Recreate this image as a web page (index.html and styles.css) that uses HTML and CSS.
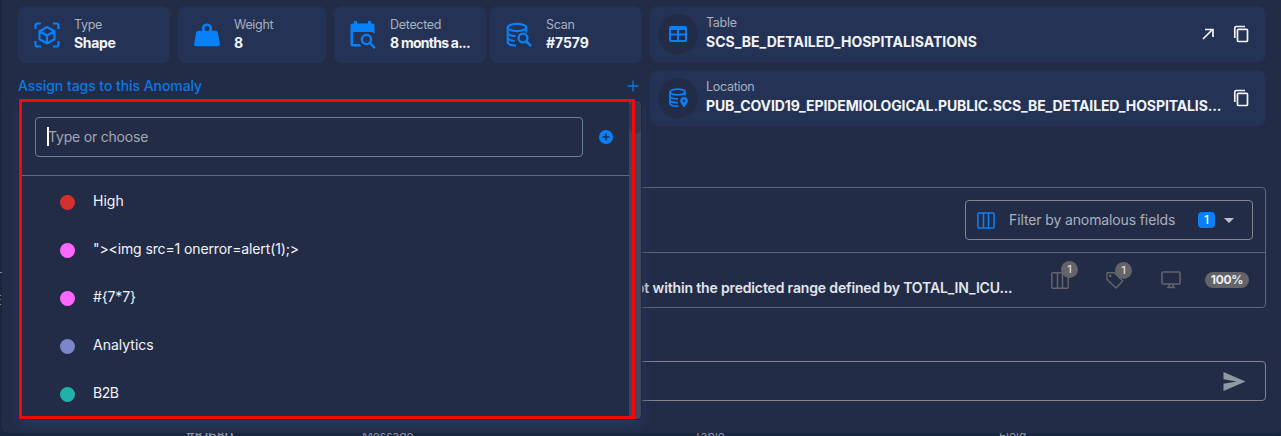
FILE: index.html
```html
<!DOCTYPE html>
<html lang="en">
<head>
<meta charset="utf-8">
<title>Anomaly</title>
<link rel="stylesheet" href="styles.css">
</head>
<body>
<div class="page">
  <div class="page-side"><span>T</span><span>E</span></div>
  <div class="page-row"><span class="c1">#81680</span><span class="c2">Message</span><span class="c3">Table</span><span class="c4">Field</span></div>
</div>
<main class="dialog">
  <section class="summary">
    <div class="left">
      <div class="stats">
        <div class="card stat">
          <svg class="i28" viewBox="0 0 28 28" fill="none" stroke="currentColor" stroke-width="2.2"><path d="M2.500 8V4.500a2 2 0 0 1 2-2H8M20 2.500h3.500a2 2 0 0 1 2 2V8M25.500 20v3.500a2 2 0 0 1-2 2H20M8 25.500H4.500a2 2 0 0 1-2-2V20"/><path stroke-linejoin="round" d="M14 6l7.500 4.200v8L14 22.500l-7.500-4.300v-8zM6.500 10.200L14 14.500l7.500-4.300M14 14.500v8"/></svg>
          <div><p class="label">Type</p><p class="value v-shape">Shape</p></div>
        </div>
        <div class="card stat">
          <svg class="i28" viewBox="0 0 28 28"><path fill="currentColor" fill-rule="evenodd" d="M14 2.500a5 5 0 0 1 4.600 7.300h4.200a2 2 0 0 1 2 1.500l2 11.200a2.400 2.400 0 0 1-2.400 2.800H3.600a2.400 2.400 0 0 1-2.400-2.800l2-11.200a2 2 0 0 1 2-1.500h4.200A5 5 0 0 1 14 2.500zm0 2.600a2.500 2.500 0 1 0 0 5a2.500 2.500 0 0 0 0-5z"/></svg>
          <div><p class="label">Weight</p><p class="value">8</p></div>
        </div>
        <div class="card stat">
          <svg class="i28" viewBox="0 0 28 28"><path fill="currentColor" d="M5 0h3v2.500h11V0h3v2.500h1.500a2 2 0 0 1 2 2V13l-2.300-2H4.200v12h6.500l2 2.500H3.500a2 2 0 0 1-2-2v-19a2 2 0 0 1 2-2H5z"/><g fill="none" stroke="currentColor" stroke-width="2.400"><circle cx="17.500" cy="18.500" r="4.600"/><path d="M20.800 22l5.200 5.200"/></g></svg>
          <div><p class="label">Detected</p><p class="value v-months">8 months a...</p></div>
        </div>
        <div class="card stat scan">
          <svg class="i28" viewBox="0 0 28 28" fill="none" stroke="currentColor" stroke-width="2.100"><ellipse cx="12" cy="6.500" rx="9.300" ry="3.600"/><path d="M2.700 6.500v14.500c0 2 3.700 3.400 8.300 3.600M2.700 11.500c0 1.900 3.500 3.300 8 3.500M2.700 16.500c0 1.900 3 3 7 3.500M21.300 6.500v5"/><circle cx="18" cy="17" r="4.400" stroke-width="2.400"/><path d="M21 20l5 5.200" stroke-width="2.600"/></svg>
          <div><p class="label">Scan</p><p class="value v-scan">#7579</p></div>
        </div>
      </div>
      <div class="assign"><span>Assign tags to this Anomaly</span>
        <svg width="12" height="12" viewBox="0 0 12 12" stroke="currentColor" stroke-width="1.300"><path d="M6 .5v11M.5 6h11"/></svg>
      </div>
    </div>
    <div class="right">
      <div class="card source">
        <span class="disc"><svg width="20" height="18" viewBox="0 0 20 18"><path fill="currentColor" fill-rule="evenodd" d="M3 1h14a2 2 0 0 1 2 2v12a2 2 0 0 1-2 2H3a2 2 0 0 1-2-2V3a2 2 0 0 1 2-2zm0 4v3.500h6V5zm8 0v3.500h6V5zM3 10.500V15h6v-4.500zm8 0V15h6v-4.500z"/></svg></span>
        <div class="grow"><p class="label">Table</p><p class="value v-table">SCS_BE_DETAILED_HOSPITALISATIONS</p></div>
        <svg class="open" width="12" height="12" viewBox="0 0 12 12" fill="none" stroke="currentColor" stroke-width="1.700"><path d="M1 11L10.500 1.500M3 1.500h8V9"/></svg>
        <svg width="16" height="18" viewBox="0 0 16 18" fill="none" stroke="currentColor" stroke-width="1.700"><path d="M1.800 13V3a1.500 1.500 0 0 1 1.500-1.500H12"/><rect x="4.500" y="4.300" width="10" height="12.200" rx="1"/></svg>
      </div>
      <div class="card source">
        <span class="disc"><svg width="20" height="20" viewBox="0 0 20 20" fill="none" stroke="currentColor" stroke-width="1.800"><ellipse cx="9.500" cy="4" rx="7.500" ry="2.800"/><path d="M2 4v11.500c0 1.600 3.500 2.700 8.500 2.700M17 4v3.500M2 8c0 1.700 3.500 2.900 8 2.900M2 12c0 1.600 3.500 2.600 8 2.600"/><path fill="currentColor" stroke="none" fill-rule="evenodd" d="M16 9a3.800 3.800 0 0 1 3.800 3.800c0 2.500-3.800 6.700-3.800 6.700s-3.800-4.200-3.800-6.700A3.800 3.800 0 0 1 16 9zm0 2.600a1.300 1.300 0 1 0 0 2.600a1.300 1.300 0 0 0 0-2.600z"/></svg></span>
        <div class="grow"><p class="label">Location</p><p class="value v-location">PUB_COVID19_EPIDEMIOLOGICAL.PUBLIC.SCS_BE_DETAILED_HOSPITALIS...</p></div>
        <svg width="16" height="18" viewBox="0 0 16 18" fill="none" stroke="currentColor" stroke-width="1.700"><path d="M1.800 13V3a1.500 1.500 0 0 1 1.500-1.500H12"/><rect x="4.500" y="4.300" width="10" height="12.200" rx="1"/></svg>
      </div>
    </div>
  </section>
  <section class="checks">
    <div class="checks-head">
      <div class="filter">
        <svg width="18" height="17" viewBox="0 0 18 17" fill="none" stroke="currentColor" stroke-width="1.500"><rect x=".9" y=".9" width="16.200" height="15.200" rx="1"/><path d="M6.500 1v15M11.500 1v15"/></svg>
        <span class="filter-text">Filter by anomalous fields</span><b>1</b><i></i>
      </div>
    </div>
    <div class="checks-row">
      <p class="message">ot within the predicted range defined by TOTAL_IN_ICU...</p>
      <span class="meta"><svg width="18" height="17" viewBox="0 0 18 17" fill="none" stroke="currentColor" stroke-width="1.500"><rect x=".8" y=".8" width="16.400" height="15.400" rx="1"/><path d="M6.500 1v15M11.500 1v15"/></svg><em>1</em></span>
      <span class="meta tag"><svg width="18" height="18" viewBox="0 0 18 18" fill="none" stroke="currentColor" stroke-width="1.500" stroke-linejoin="round"><path d="M1 1.800h7.500l8.200 8.200-6.700 7L1 8.500z"/><circle cx="4.200" cy="4.800" r=".6"/></svg><em>1</em></span>
      <svg class="monitor" width="20" height="18" viewBox="0 0 20 18" fill="none" stroke="currentColor" stroke-width="1.600"><rect x="1" y="1" width="18" height="12" rx="1"/><path d="M8 13v3.500M12 13v3.500M6 16.500h8"/></svg>
      <span class="percent">100%</span>
    </div>
  </section>
  <div class="comment"><svg width="23" height="19" viewBox="0 0 23 19"><path fill="currentColor" d="M.5 0l22 9.500L.5 19v-7.300l13-2.200-13-2.200z"/></svg></div>

  <div class="popover">
    <div class="pop-main">
      <div class="pop-head"><div class="input"><i class="caret"></i><span>Type or choose</span></div>
        <svg width="14" height="14" viewBox="0 0 14 14"><circle cx="7" cy="7" r="7" fill="#0880fa"/><path d="M7 3.500v7M3.500 7h7" stroke="#222c47" stroke-width="1.400"/></svg></div>
      <ul>
        <li><i class="red"></i><span>High</span></li>
        <li><i class="pink"></i><span class="t-img">"&gt;&lt;img src=1 onerror=alert(1);&gt;</span></li>
        <li><i class="pink"></i><span class="t-code">#{7*7}</span></li>
        <li><i class="violet"></i><span>Analytics</span></li>
        <li><i class="teal"></i><span class="t-b2b">B2B</span></li>
      </ul>
    </div>
    <div class="scroll"><div></div></div>
  </div>
  <div class="highlight"></div>
</main>
</body>
</html>
```
FILE: styles.css
```css
* { box-sizing: border-box; }
body { margin: 0; height: 436px; overflow: hidden; position: relative; background: #192640; font-family: Inter, "Liberation Sans", sans-serif; font-size: 14px; color: #f2f4f8; }
p, ul { margin: 0; padding: 0; }
svg { display: block; flex: none; }
.page { height: 436px; overflow: hidden; display: flex; flex-direction: column; justify-content: space-between; color: #8a92a3; font-size: 13px; }
.page-side { padding-top: 266px; margin-left: -6px; display: flex; flex-direction: column; line-height: 23px; }
.page-row { display: flex; padding-left: 186px; height: 8px; line-height: 15px; flex: none; white-space: nowrap; font-size: 12px; }
.c1 { width: 176px; font-weight: 600; font-size: 13px; }
.c2 { width: 332px; }
.c3 { width: 305px; }
.dialog { position: absolute; top: 0; left: 2px; right: 0; height: 433px; padding: 6px 15px 0 16px; overflow: hidden; background: #232c47; border-radius: 0 0 6px 6px; }
.summary { display: flex; gap: 8px; height: 120px; }
.left { width: 624px; }
.right { width: 616px; display: flex; flex-direction: column; gap: 8px; }
.card { background: #243355; border-radius: 8px; display: flex; align-items: center; }
.stats { display: flex; height: 57px; }
.stat { width: 152px; padding-left: 15px; gap: 13px; height: 57px; margin-right: 8px; }
.stats .stat:nth-child(2) { width: 148px; }
.stats .stat:nth-child(3) { margin-right: 4px; }
.stats .scan { margin-right: 0; }
.i28 { width: 28px; height: 28px; color: #0880fa; }
.label { font-size: 12.500px; line-height: 18px; letter-spacing: -.3px; color: #a9b0bf; white-space: nowrap; }
.value { font-size: 14px; line-height: 20px; font-weight: 700; letter-spacing: -.5px; white-space: nowrap; }
.stat .value { margin-top: -1px; }
.v-shape { letter-spacing: -.35px; }
.v-months { letter-spacing: -.75px; }
.v-scan { letter-spacing: -.1px; }
.v-table { letter-spacing: 0; }
.v-location { letter-spacing: -.11px; }
.assign { display: flex; justify-content: space-between; align-items: center; height: 34px; padding: 0 3px 0 0; margin-top: 6px; color: #0779e8; font-size: 14px; font-weight: 500; letter-spacing: -.06px; }
.assign span { padding-bottom: 2px; }
.source { height: 56px; padding: 0 17px 0 8px; }
.disc { width: 40px; height: 40px; border-radius: 50%; background: #222c47; display: grid; place-items: center; color: #0880fa; margin-right: 8px; flex: none; }
.grow { flex: 1; min-width: 0; padding-bottom: 2px; }
.open { margin-right: 19px; }
.checks { margin-top: 61px; height: 121px; border: 1px solid #5d667c; border-radius: 4px; }
.checks-head { height: 65px; display: flex; justify-content: flex-end; align-items: center; padding-right: 12px; border-bottom: 1px solid #5d667c; }
.filter { width: 288px; height: 40px; border: 1px solid #83858b; border-radius: 4px; display: flex; align-items: center; padding-left: 11px; color: #0880fa; }
.filter-text { margin-left: 14px; width: 189px; padding-bottom: 2px; color: #a9b0bf; font-size: 14px; letter-spacing: -.12px; white-space: nowrap; }
.filter b { width: 17px; height: 16px; border-radius: 4px; background: #0880fa; color: #fff; font-size: 12px; font-weight: 500; line-height: 16px; text-align: center; }
.filter i { margin-left: 9px; border: 5px solid transparent; border-top-color: #bdc1ca; border-bottom: 0; }
.checks-row { height: 54px; display: flex; align-items: center; padding-left: 617px; color: #626467; }
.message { width: 415px; padding-top: 15px; color: #e2e5ea; font-weight: 600; font-size: 14px; letter-spacing: -.15px; white-space: nowrap; }
.meta { position: relative; margin-right: 37px; color: #626467; }
.meta em { position: absolute; left: 10px; top: -11px; width: 17px; height: 17px; border-radius: 50%; background: #626467; color: #dcdee2; font: 500 11px/17px Inter, sans-serif; text-align: center; }
.tag em { left: 9px; top: -9px; }
.percent { margin-left: 24px; width: 44px; height: 16px; line-height: 16px; border-radius: 8px; background: #626467; color: #eee; font-size: 12px; font-weight: 700; letter-spacing: -.3px; text-align: center; }
.comment { margin-top: 53px; height: 40px; border: 1px solid #83858b; border-radius: 4px; display: flex; align-items: center; justify-content: flex-end; padding-right: 19px; color: #9097a5; }
.popover { position: absolute; left: 16px; top: 100px; width: 624px; height: 320px; display: flex; overflow: hidden; background: #232c47; border: 1px solid #1b2845; border-radius: 5px; box-shadow: 0 6px 12px #25385d; }
.pop-main { flex: 1; }
.pop-head { height: 75px; padding: 16px 0 0 16px; display: flex; gap: 16px; border-bottom: 1px solid #626a7d; }
.pop-head svg { margin-top: 13px; }
.input { width: 548px; height: 40px; border: 1px solid #68809b; border-radius: 4px; padding: 0 0 2px 11px; display: flex; align-items: center; color: #a2a8b5; letter-spacing: -.2px; }
.caret { width: 2px; height: 19px; margin-right: -1px; background: #fff; }
ul { list-style: none; padding-top: 1px; }
li { height: 48px; display: flex; align-items: center; gap: 17px; padding-left: 41px; }
li i { width: 15px; height: 15px; border-radius: 50%; margin-top: 2px; }
li span { margin-left: 1px; padding-bottom: 2px; }
.t-img { letter-spacing: -.12px; }
.t-code { letter-spacing: -.15px; }
.t-b2b { letter-spacing: -.5px; }
.red { background: #d3302f; }
.pink { background: #fc67fd; }
.violet { background: #7c86cb; }
.teal { background: #20b2aa; }
.scroll { width: 12px; background: #42475c; border-radius: 0 4px 4px 0; }
.scroll div { height: 33px; background: #353b4e; border-radius: 6px; }
.highlight { position: absolute; left: 17px; top: 99px; width: 616px; height: 320px; border: 3px solid #f90606; }
```
